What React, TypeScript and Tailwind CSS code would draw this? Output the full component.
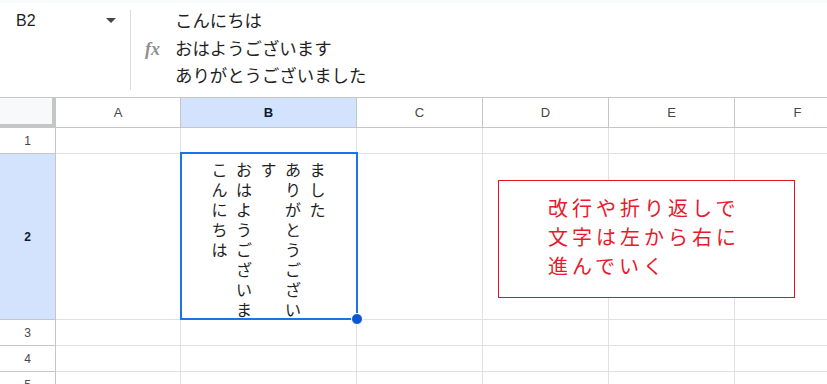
import React from "react";

const font = { fontFamily: '"Liberation Sans", "Noto Sans CJK JP", Arial, sans-serif' };
const jp = { fontFamily: '"Noto Sans CJK JP", "Liberation Sans", sans-serif' };

const cols = [
  { key: "A", w: "w-[125px]" },
  { key: "B", w: "w-[176px]" },
  { key: "C", w: "w-[126px]" },
  { key: "D", w: "w-[126px]" },
  { key: "E", w: "w-[126px]" },
  { key: "F", w: "w-[126px]" },
];

const vcols = ["こんにちは", "おはようございま", "す", "ありがとうござい", "ました"];

function Row({ n, h, selected, children }: { n: number; h: string; selected?: boolean; children?: React.ReactNode }) {
  return (
    <div className={`flex ${h} shrink-0`}>
      <div
        className={`w-[56px] shrink-0 flex items-center justify-center border-r border-b border-[#c4c7c5] text-[12px] ${
          selected ? "bg-[#d3e3fd] text-[#0b1a33] font-bold" : "bg-white text-[#444746]"
        }`}
      >
        {n}
      </div>
      {cols.map((c) => (
        <div key={c.key} className={`${c.w} shrink-0 border-r border-b border-[#e1e1e1] relative`}>
          {c.key === "B" ? children : null}
        </div>
      ))}
    </div>
  );
}

export default function App() {
  return (
    <div className="w-[827px] h-[384px] overflow-hidden bg-white relative" style={font}>
      {/* formula area */}
      <div className="h-[3px] bg-[#f9fbfd]" />
      <div className="h-[95px] flex border-b border-[#c4c7c5]">
        <div className="w-[130px] shrink-0 flex items-start pt-[9px] pl-[16px] pr-[14px]">
          <span className="text-[16px] text-[#1f1f1f] leading-[18px]">B2</span>
          <span className="ml-auto mt-[6px] w-0 h-0 border-l-[5px] border-r-[5px] border-t-[5px] border-l-transparent border-r-transparent border-t-[#444746]" />
        </div>
        <div className="w-px bg-[#dadce0] my-[7px] shrink-0" />
        <div className="flex items-center pl-[14px]">
          <span
            className="text-[#8f8f8f] italic font-bold text-[18px] w-[30px] -mt-[2px]"
            style={{ fontFamily: '"Liberation Serif", "DejaVu Serif", serif' }}
          >
            fx
          </span>
        </div>
        <div className="flex flex-col pt-[3px] text-[17.4px] leading-[27.5px] text-[#1f1f1f]" style={jp}>
          <div>こんにちは</div>
          <div>おはようございます</div>
          <div>ありがとうございました</div>
        </div>
      </div>

      {/* header row */}
      <div className="flex h-[30px]">
        <div className="w-[56px] shrink-0 bg-[#f8f9fa] border-r-[4px] border-b-[4px] border-[#c4c7c5]" />
        {cols.map((c) => (
          <div
            key={c.key}
            className={`${c.w} shrink-0 flex items-center justify-center border-r border-b border-[#c4c7c5] text-[13px] ${
              c.key === "B" ? "bg-[#d3e3fd] text-[#0b1a33] font-bold" : "text-[#444746]"
            }`}
          >
            {c.key}
          </div>
        ))}
      </div>

      <Row n={1} h="h-[26px]" />
      <Row n={2} h="h-[166px]" selected>
        <div className="flex justify-center pt-[5px]" style={jp}>
          {vcols.map((col, i) => (
            <div key={i} className="w-[24.5px] flex flex-col items-center text-[16px] leading-[20px] text-[#1f1f1f]">
              {Array.from(col).map((ch, j) => (
                <span key={j} className="block h-[20px]">
                  {ch}
                </span>
              ))}
            </div>
          ))}
        </div>
      </Row>
      <Row n={3} h="h-[26px]" />
      <Row n={4} h="h-[26px]" />
      <Row n={5} h="h-[26px]" />

      {/* selection */}
      <div className="absolute left-[180px] top-[152px] w-[178px] h-[168px] border-2 border-[#1a73e8] pointer-events-none" />
      <div className="absolute left-[352px] top-[314px] w-[10px] h-[10px] rounded-full bg-[#0b57d0] border border-white box-content -translate-x-[1px] -translate-y-[1px]" />

      {/* text box */}
      <div className="absolute left-[498px] top-[180px] w-[297px] h-[118px] border border-[#e3131f] bg-white pl-[49px] pt-[12px]">
        <div className="text-[20px] leading-[29px] tracking-[4px] text-[#e8192c]" style={jp}>
          <div>改行や折り返しで</div>
          <div>文字は左から右に</div>
          <div>進んでいく</div>
        </div>
      </div>
    </div>
  );
}
